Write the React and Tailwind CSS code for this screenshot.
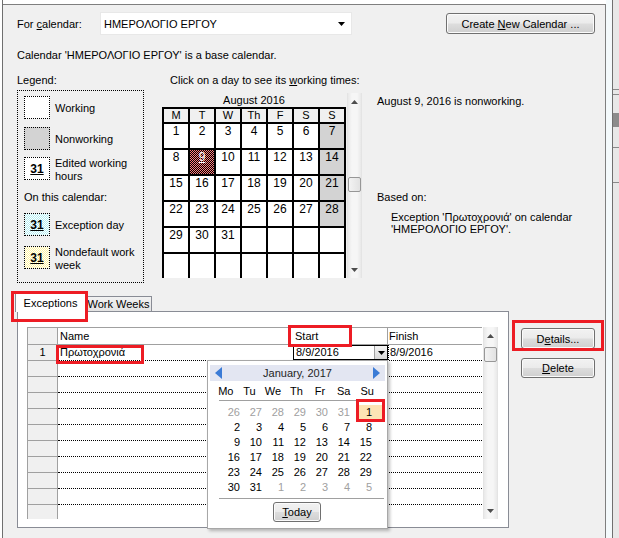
import React from 'react';

const btn =
  'flex items-center justify-center rounded-[3px] border border-[#707070] bg-[linear-gradient(#f2f2f2_0%,#ebebeb_48%,#dddddd_52%,#cfcfcf_100%)] shadow-[inset_0_0_0_1px_#fbfbfb]';

function Tri({ dir }) {
  const pts = dir === 'up' ? '0,4 3.5,0 7,4' : '0,0 7,0 3.5,4';
  return (
    <svg width="7" height="4" viewBox="0 0 7 4">
      <polygon points={pts} fill="#4d4d4d" />
    </svg>
  );
}

function ScrollBar({ className, thumbClass }) {
  return (
    <div className={`flex flex-col border-x border-[#e4e4e4] bg-[linear-gradient(to_right,#e9e9e9,#f6f6f6_30%,#f6f6f6_70%,#e9e9e9)] ${className}`}>
      <div className="flex h-[17px] items-center justify-center">
        <Tri dir="up" />
      </div>
      <div className="flex-1">
        <div className={`rounded-[2px] border border-[#979797] bg-[linear-gradient(to_right,#f3f3f3,#e2e2e2)] ${thumbClass}`} />
      </div>
      <div className="flex h-[17px] items-center justify-center">
        <Tri dir="down" />
      </div>
    </div>
  );
}

// 1px dither used for the selected day and legend swatches
function Dither({ a, b, id }) {
  return (
    <svg width="100%" height="100%" className="[grid-area:1/1]" shapeRendering="crispEdges">
      <defs>
        <pattern id={id} width="2" height="2" patternUnits="userSpaceOnUse">
          <rect width="2" height="2" fill={b} />
          <rect width="1" height="1" fill={a} />
          <rect x="1" y="1" width="1" height="1" fill={a} />
        </pattern>
      </defs>
      <rect width="100%" height="100%" fill={`url(#${id})`} />
    </svg>
  );
}

const weeks = [
  [1, 2, 3, 4, 5, 6, 7],
  [8, 9, 10, 11, 12, 13, 14],
  [15, 16, 17, 18, 19, 20, 21],
  [22, 23, 24, 25, 26, 27, 28],
  [29, 30, 31, '', '', '', ''],
  ['', '', '', '', '', '', ''],
];

const janDays = [
  [26, 27, 28, 29, 30, 31, 1],
  [2, 3, 4, 5, 6, 7, 8],
  [9, 10, 11, 12, 13, 14, 15],
  [16, 17, 18, 19, 20, 21, 22],
  [23, 24, 25, 26, 27, 28, 29],
  [30, 31, 1, 2, 3, 4, 5],
];

function MonthGrid() {
  return (
    <div className="grid h-[171px] grid-cols-[repeat(7,24px)] grid-rows-[13px_repeat(6,24px)] gap-[2px] overflow-hidden bg-black p-[2px]">
      {['M', 'T', 'W', 'Th', 'F', 'S', 'S'].map((d, i) => (
        <div key={'h' + i} className="flex items-center justify-center bg-[#f0f0f0] text-[11px] leading-[13px]">
          {d}
        </div>
      ))}
      {weeks.map((w, r) =>
        w.map((d, c) => {
          if (d === 9) {
            return (
              <div key={r + '-' + c} className="grid">
                <Dither id="sel9" a="#ff7c7c" b="#000000" />
                <span className="z-10 text-center text-[12px] leading-[14px] text-white underline [grid-area:1/1]">9</span>
              </div>
            );
          }
          const gray = c === 6 && r < 4;
          return (
            <div
              key={r + '-' + c}
              className={gray ? 'bg-[#d3d3d3] text-center text-[12px] leading-[14px]' : 'bg-white text-center text-[12px] leading-[14px]'}
            >
              {d}
            </div>
          );
        })
      )}
    </div>
  );
}

function DatePicker() {
  return (
    <div className="absolute left-[207px] top-[360px] flex h-[169px] w-[181px] flex-col border border-[#a7a7a7] bg-white shadow-[2px_2px_3px_rgba(0,0,0,0.25)]">
      <div className="ml-[2px] mt-[4px] flex h-[16px] w-[175px] items-center justify-between bg-[#e3e6f2] px-[5px]">
        <svg width="7" height="12" viewBox="0 0 7 12">
          <polygon points="7,0 0,6 7,12" fill="#3b7bd6" />
        </svg>
        <span className="text-[11px] leading-[14px] text-[#1e1e1e]">January, 2017</span>
        <svg width="7" height="12" viewBox="0 0 7 12">
          <polygon points="0,0 7,6 0,12" fill="#3b7bd6" />
        </svg>
      </div>
      <div className="ml-[6px] mt-[3px] grid h-[14px] w-[165px] grid-cols-7 text-center text-[11px] leading-[14px]">
        {['Mo', 'Tu', 'We', 'Th', 'Fr', 'Sa', 'Su'].map((d) => (
          <div key={d}>{d}</div>
        ))}
      </div>
      <div className="ml-[11px] mt-[2px] h-[1px] w-[165px] bg-[#a0a0a0]" />
      <div className="ml-[10px] mt-[4px] grid w-[154px] grid-cols-7 text-right text-[11px] leading-[15px]">
        {janDays.map((w, r) =>
          w.map((d, c) => {
            const other = (r === 0 && c < 6) || (r === 5 && c > 1);
            if (r === 0 && c === 6) {
              return (
                <div key={r + '-' + c}>
                  <span className="-mr-[10px] inline-block bg-[#fde4b4] pl-[8px] pr-[10px]">1</span>
                </div>
              );
            }
            return (
              <div key={r + '-' + c} className={other ? 'text-[#a0a0a0]' : 'text-black'}>
                {d}
              </div>
            );
          })
        )}
      </div>
      <div className="ml-[11px] mt-[3px] h-[1px] w-[165px] bg-[#a0a0a0]" />
      <div className={`ml-[65px] mt-[3px] h-[20px] w-[48px] ${btn}`}>
        <span>
          <span className="underline">T</span>oday
        </span>
      </div>
    </div>
  );
}

function Row({ children, num }) {
  return (
    <div className="flex h-[16px]">
      <div className="w-[30px] border-r border-b border-[#a0a0a0] bg-[#f0f0f0] text-center leading-[15px]">{num}</div>
      <div className="flex flex-1 border-b border-dotted border-black">{children}</div>
    </div>
  );
}

export default function App() {
  return (
    <div className="relative flex h-[538px] w-[619px] overflow-hidden bg-white font-['Liberation_Sans','Noto_Sans',sans-serif] text-[11px] leading-[14px] text-black">
      <div className="w-[2px] bg-white" />
      <div className="w-[1px] bg-[#6f6f6f]" />
      <div className="mt-[4px] flex w-[603px] flex-col border-t border-r border-[#7f7f7f] bg-[#f0f0f0] pl-[14px]">
        {/* top row */}
        <div className="mt-[7px] flex h-[23px] items-center">
          <div className="w-[83px]">
            For <span className="underline">c</span>alendar:
          </div>
          <div className="flex h-[23px] w-[252px] items-center justify-between border border-[#e8e8e8] bg-white pl-[3px] pr-[6px]">
            <span>ΗΜΕΡΟΛΟΓΙΟ ΕΡΓΟΥ</span>
            <svg width="7" height="4" viewBox="0 0 7 4">
              <polygon points="0,0 7,0 3.5,4" fill="#000" />
            </svg>
          </div>
          <div className={`ml-[94px] h-[21px] w-[149px] ${btn}`}>
            <span>
              Create <span className="underline">N</span>ew Calendar ...
            </span>
          </div>
        </div>

        <div className="mt-[13px]">Calendar 'ΗΜΕΡΟΛΟΓΙΟ ΕΡΓΟΥ' is a base calendar.</div>

        <div className="mt-[11px] flex">
          <div className="w-[153px]">Legend:</div>
          <div>
            Click on a day to see its <span className="underline">w</span>orking times:
          </div>
        </div>

        {/* legend / calendar / info */}
        <div className="mt-[3px] flex">
          <div className="flex h-[193px] w-[127px] flex-col border border-dotted border-black pl-[6px] pt-[5px]">
            <div className="flex items-center">
              <div className="h-[23px] w-[26px] border border-dotted border-black bg-white" />
              <span className="ml-[5px]">Working</span>
            </div>
            <div className="mt-[8px] flex items-center">
              <div className="h-[23px] w-[26px] border border-dotted border-black bg-[#d3d3d3]" />
              <span className="ml-[5px]">Nonworking</span>
            </div>
            <div className="mt-[7px] flex h-[23px] items-start">
              <div className="flex h-[23px] w-[26px] items-center justify-center border border-dotted border-black bg-white text-[12px] font-bold underline">
                31
              </div>
              <span className="ml-[5px] leading-[13px]">
                Edited working
                <br />
                hours
              </span>
            </div>
            <div className="mt-[10px]">On this calendar:</div>
            <div className="mt-[9px] flex items-center">
              <div className="grid h-[23px] w-[26px] border border-dotted border-black">
                <Dither id="exc" a="#b4eef2" b="#ffffff" />
                <span className="z-10 self-center text-center text-[12px] font-bold underline [grid-area:1/1]">31</span>
              </div>
              <span className="ml-[5px]">Exception day</span>
            </div>
            <div className="mt-[10px] flex h-[23px] items-start">
              <div className="grid h-[23px] w-[26px] border border-dotted border-black">
                <Dither id="ndw" a="#fff4a0" b="#ffffff" />
                <span className="z-10 self-center text-center text-[12px] font-bold underline [grid-area:1/1]">31</span>
              </div>
              <span className="ml-[5px] leading-[13px]">
                Nondefault work
                <br />
                week
              </span>
            </div>
          </div>

          <div className="ml-[18px] flex">
            <div className="flex w-[184px] flex-col pt-[3px]">
              <div className="h-[14px] text-center">August 2016</div>
              <MonthGrid />
            </div>
            <ScrollBar className="ml-[1px] mt-[3px] h-[185px] w-[15px]" thumbClass="mt-[67px] h-[15px] w-full" />
          </div>

          <div className="ml-[15px] flex flex-col pt-[4px]">
            <div>August 9, 2016 is nonworking.</div>
            <div className="mt-[82px]">Based on:</div>
            <div className="mt-[7px] pl-[14px] leading-[12px]">
              Exception 'Πρωτοχρονιά' on calendar
              <br />
              'ΗΜΕΡΟΛΟΓΙΟ ΕΡΓΟΥ'.
            </div>
          </div>
        </div>

        {/* tabs */}
        <div className="mt-[9px] flex h-[19px] items-end">
          <div className="relative z-10 -mb-[1px] -ml-[2px] flex h-[20px] w-[71px] items-center justify-center border-t border-r border-l border-[#898c95] bg-white">
            Exceptions
          </div>
          <div className="flex h-[15px] w-[66px] items-center justify-center border-t border-r border-[#898c95] bg-[linear-gradient(#f2f2f2,#e3e3e3)] text-[11px]">
            Work Weeks
          </div>
        </div>

        <div className="flex">
          <div className="h-[217px] w-[492px] border border-[#898c95] bg-white pl-[9px] pt-[15px]">
            <div className="flex h-[192px] w-[471px]">
              <div className="flex w-[455px] flex-col border-l border-[#a0a0a0]">
                <div className="flex h-[18px] border-t border-b border-[#a0a0a0] leading-[16px]">
                  <div className="w-[30px] border-r border-[#a0a0a0] bg-[#f0f0f0]" />
                  <div className="w-[233px] border-r border-[#a0a0a0] pl-[2px]">Name</div>
                  <div className="w-[97px] border-r border-[#a0a0a0] pl-[4px]">Start</div>
                  <div className="w-[94px] pl-[1px]">Finish</div>
                </div>
                <Row num="1">
                  <div className="w-[233px] pl-[2px] leading-[15px]">Πρωτοχρονιά</div>
                  <div className="ml-[2px] flex h-[15px] w-[95px] items-center justify-between border border-black pl-[2px]">
                    <span className="leading-[13px]">8/9/2016</span>
                    <div className="flex h-[13px] w-[13px] items-center justify-center border-l border-[#a0a0a0] bg-[linear-gradient(#f4f4f4,#d8d8d8)]">
                      <svg width="7" height="4" viewBox="0 0 7 4">
                        <polygon points="0,0 7,0 3.5,4" fill="#000" />
                      </svg>
                    </div>
                  </div>
                  <div className="border-l border-dotted border-black pl-[1px] leading-[15px]">8/9/2016</div>
                </Row>
                <Row />
                <Row />
                <Row />
                <Row />
                <Row />
                <Row />
                <Row />
                <Row />
                <Row />
                <div className="flex flex-1">
                  <div className="w-[30px] border-r border-[#a0a0a0] bg-[#f0f0f0]" />
                </div>
              </div>
              <ScrollBar className="ml-[1px] h-[192px] w-[16px]" thumbClass="mt-[3px] h-[15px] w-full" />
            </div>
          </div>

          <div className="ml-[12px] mt-[17px] flex flex-col">
            <div className={`h-[21px] w-[74px] ${btn}`}>
              <span>
                D<span className="underline">e</span>tails...
              </span>
            </div>
            <div className={`mt-[9px] h-[20px] w-[74px] ${btn}`}>
              <span>
                <span className="underline">D</span>elete
              </span>
            </div>
          </div>
        </div>
      </div>
      <div className="w-[6px] bg-[#f4fafc]" />
      <div className="w-[1px] bg-[#707070]" />
      <div className="flex flex-1 flex-col bg-[#e8e8e8]">
        <div className="mt-[89px] h-[1px] bg-[#8a8a8a]" />
        <div className="mt-[4px] h-[1px] bg-[#8a8a8a]" />
        <div className="mt-[18px] h-[14px] bg-[#8c8c8c]" />
        <div className="mt-[20px] h-[1px] bg-[#8a8a8a]" />
        <div className="mt-[34px] h-[1px] bg-[#8a8a8a]" />
      </div>

      <DatePicker />

      {/* red annotation boxes */}
      <div className="absolute left-[11px] top-[291px] z-20 h-[31px] w-[77px] border-[3px] border-[#ed1c24]" />
      <div className="absolute left-[56px] top-[345px] z-20 h-[19px] w-[88px] border-[3px] border-[#ed1c24]" />
      <div className="absolute left-[288px] top-[325px] z-20 h-[22px] w-[64px] border-[3px] border-[#ed1c24]" />
      <div className="absolute left-[512px] top-[320px] z-20 h-[31px] w-[92px] border-[3px] border-[#ed1c24]" />
      <div className="absolute left-[356px] top-[399px] z-20 h-[23px] w-[29px] border-[3px] border-[#ed1c24]" />
    </div>
  );
}
